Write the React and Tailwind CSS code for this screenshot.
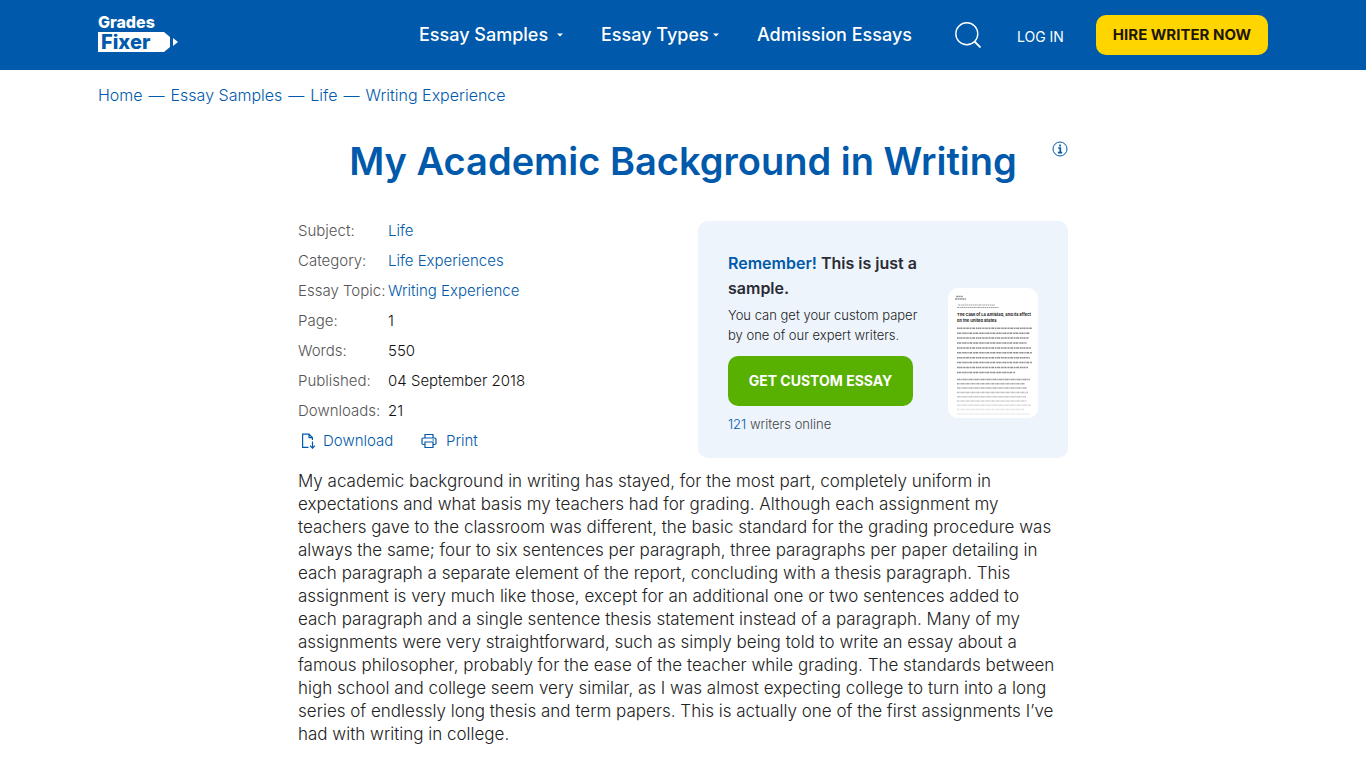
const crumbs = ["Home", "Essay Samples", "Life", "Writing Experience"];

const details = [
  { label: "Subject:", value: "Life", link: true },
  { label: "Category:", value: "Life Experiences", link: true },
  { label: "Essay Topic:", value: "Writing Experience", link: true },
  { label: "Page:", value: "1" },
  { label: "Words:", value: "550" },
  { label: "Published:", value: "04 September 2018" },
  { label: "Downloads:", value: "21" },
];

const essayLines = [
  "My academic background in writing has stayed, for the most part, completely uniform in",
  "expectations and what basis my teachers had for grading. Although each assignment my",
  "teachers gave to the classroom was different, the basic standard for the grading procedure was",
  "always the same; four to six sentences per paragraph, three paragraphs per paper detailing in",
  "each paragraph a separate element of the report, concluding with a thesis paragraph. This",
  "assignment is very much like those, except for an additional one or two sentences added to",
  "each paragraph and a single sentence thesis statement instead of a paragraph. Many of my",
  "assignments were very straightforward, such as simply being told to write an essay about a",
  "famous philosopher, probably for the ease of the teacher while grading. The standards between",
  "high school and college seem very similar, as I was almost expecting college to turn into a long",
  "series of endlessly long thesis and term papers. This is actually one of the first assignments I’ve",
  "had with writing in college.",
];

const firstParagraph = [75, 73, 72, 70, 74, 75, 73, 75, 71, 58];
const secondParagraph = [73, 68, 70, 71, 69, 70, 74, 67, 73];

const Logo = () => (
  <a href="#" aria-label="Grades Fixer" className="block w-20 shrink-0 text-white">
    <span className="block text-base leading-4 font-extrabold">Grades</span>
    <span className="relative mt-0.5 block h-5">
      <svg viewBox="0 0 80 20" className="absolute inset-0 h-5 w-20" aria-hidden="true">
        <path d="M0 0H66L72 5V15L66 20H0Z" fill="#fff" />
        <path d="M75 6L80 10L75 14Z" fill="#fff" />
      </svg>
      <span className="relative block pl-[3px] text-xl leading-5 font-extrabold text-[#0059aa]">Fixer</span>
    </span>
  </a>
);

const Caret = () => (
  <svg viewBox="0 0 6 4" className="h-1 w-1.5 shrink-0" aria-hidden="true">
    <path d="M0 .5H6L3 3.5Z" fill="currentColor" />
  </svg>
);

const Header = () => (
  <header className="bg-[#0059aa] px-4">
    <div className="mx-auto flex h-[70px] max-w-[1170px] items-center justify-between text-white">
      <div className="pb-1">
        <Logo />
      </div>
      <div className="flex items-center">
        <nav className="flex gap-[38px] text-[18px] leading-6 font-medium whitespace-nowrap">
          <a href="#" className="flex w-36 items-center justify-between">
            Essay Samples <Caret />
          </a>
          <a href="#" className="flex w-[118px] items-center justify-between">
            Essay Types <Caret />
          </a>
          <a href="#" className="w-[158px]">Admission Essays</a>
        </nav>
        <button type="button" aria-label="Search" className="ml-10 size-[26px]">
          <svg viewBox="0 0 26 26" className="size-[26px]" fill="none" stroke="currentColor" strokeWidth="1.4" aria-hidden="true">
            <circle cx="11.8" cy="11.8" r="11" />
            <path d="M19.5 19.5L25.5 25.5" strokeWidth="1.8" />
          </svg>
        </button>
        <a href="#" className="ml-9 w-[49px] pt-1 text-sm leading-5 whitespace-nowrap">LOG IN</a>
        <button type="button" className="ml-[30px] h-10 w-[172px] rounded-[10px] bg-[#ffd500] text-[15px] font-bold whitespace-nowrap text-[#1e1705]">
          HIRE WRITER NOW
        </button>
      </div>
    </div>
  </header>
);

const Breadcrumbs = () => (
  <nav aria-label="Breadcrumb" className="mx-auto flex max-w-[1170px] gap-1.5 pt-[15px] text-base leading-5 font-light text-[#0059aa]">
    {crumbs.map((crumb, i) => (
      <span key={crumb} className="flex gap-1.5">
        {i > 0 && <span>—</span>}
        <a href="#">{crumb}</a>
      </span>
    ))}
  </nav>
);

const SampleSheet = () => (
  <svg viewBox="0 0 90 130" className="h-[130px] w-[90px] shrink-0" role="img" aria-label="Essay sample preview">
    <defs>
      <linearGradient id="sheet-fade" x1="0" y1="0" x2="0" y2="1">
        <stop offset="0" stopColor="#fff" stopOpacity="0" />
        <stop offset="1" stopColor="#fff" stopOpacity=".9" />
      </linearGradient>
    </defs>
    <rect width="90" height="130" rx="10" fill="#fff" />
    <path d="M8 8.5H15M7 11H18" stroke="#999" strokeWidth="1.5" strokeDasharray="2 .4" />
    <path d="M10 17H47M9 19.5H51" stroke="#888" strokeWidth=".8" strokeDasharray="2 .5 1.3 .4" />
    <g fontSize="4" fontWeight="700" fill="#222">
      <text x="9" y="28">The Case of La Amistad, and Its Effect</text>
      <text x="9" y="34">on the United States</text>
    </g>
    <g stroke="#8c8c8c" strokeWidth="1.5">
      {firstParagraph.map((width, i) => (
        <line key={i} x1="9" x2={9 + width} y1={40.3 + i * 4.9} y2={40.3 + i * 4.9} strokeDasharray={i % 2 ? "1.2 .4 2.3 .7 .8 .3" : "1.7 .5 .9 .3 2.1 .8"} />
      ))}
      {secondParagraph.map((width, i) => (
        <line key={i} x1="9" x2={9 + width} y1={91.5 + i * 4.3} y2={91.5 + i * 4.3} strokeDasharray={i % 2 ? "1.9 .6 1.1 .3 .7 .4" : ".9 .3 2.4 .7 1.3 .4"} />
      ))}
    </g>
    <rect y="85" width="90" height="45" rx="10" fill="url(#sheet-fade)" />
  </svg>
);

const EssayDetails = () => (
  <div className="text-[15px] leading-[30px] font-light">
    <dl className="-mt-[5px]">
      {details.map(({ label, value, link }) => (
        <div key={label} className="flex h-[30px]">
          <dt className="w-[90px] whitespace-nowrap text-[#555]">{label}</dt>
          <dd className="text-[#111]">
            {link ? <a href="#" className="text-[#0059aa]">{value}</a> : value}
          </dd>
        </div>
      ))}
    </dl>
    <div className="flex pl-1 text-[#0059aa]">
      <button type="button" className="flex w-[119px] items-center gap-[7px]">
        <svg viewBox="0 0 14 16" className="h-4 w-3.5" fill="none" stroke="currentColor" strokeWidth="1.2" aria-hidden="true">
          <path d="M6.5 14.4H.6V1.2H7L10.4 4.6V7M7 1.2V4.6H10.4M10.5 8.5V15M8 12.7L10.5 15.2L13 12.7" />
        </svg>
        Download
      </button>
      <button type="button" className="flex items-center gap-[9px]">
        <svg viewBox="0 0 16 16" className="size-4" fill="none" stroke="currentColor" strokeWidth="1.2" aria-hidden="true">
          <path d="M4 5V1.5H12V5M4 11.5H2.2Q1 11.5 1 10.3V6.2Q1 5 2.2 5H13.8Q15 5 15 6.2V10.3Q15 11.5 13.8 11.5H12M4 9H12V14.5H4ZM11.5 7H13" />
        </svg>
        Print
      </button>
    </div>
  </div>
);

const OrderCard = () => (
  <aside className="flex w-[370px] shrink-0 items-center justify-between rounded-[10px] bg-[#edf4fc] px-[30px] pt-[30px] pb-6">
    <div className="w-[200px]">
      <p className="text-base leading-[25px] font-semibold whitespace-nowrap text-[#2b2b33]">
        <span className="text-[#0059aa]">Remember!</span> This is just a<br />
        sample.
      </p>
      <p className="mt-1 text-[13px] leading-5 font-light whitespace-nowrap text-[#222]">
        You can get your custom paper<br />
        by one of our expert writers.
      </p>
      <button type="button" className="mt-[11px] h-[50px] w-[185px] rounded-[10px] bg-[#58b000] text-sm font-bold whitespace-nowrap text-white">
        GET CUSTOM ESSAY
      </button>
      <p className="mt-2 text-[13px] leading-5 font-light text-[#444]">
        <span className="text-[#0059aa]">121</span> writers online
      </p>
    </div>
    <div className="pt-5">
      <SampleSheet />
    </div>
  </aside>
);

export default function App() {
  return (
    <div className="bg-white font-['Inter','Liberation_Sans',sans-serif]">
      <Header />
      <div className="px-4">
        <Breadcrumbs />
      </div>
      <main className="mx-auto max-w-[770px]">
        <div className="relative mt-8 px-10">
          <h1 className="text-center text-[38px] leading-[48px] font-semibold whitespace-nowrap text-[#0059aa]">
            My Academic Background in Writing
          </h1>
          <button type="button" aria-label="About this essay" className="absolute top-1 right-0 text-[#0059aa]">
            <svg viewBox="0 0 16 16" className="size-4" fill="none" stroke="currentColor" aria-hidden="true">
              <circle cx="8" cy="8" r="7" />
              <path d="M8 3.6V5.4M6.2 7H8.3V11.5M6 11.7H10.2" strokeWidth="1.7" />
            </svg>
          </button>
        </div>
        <div className="mt-9 flex items-start justify-between">
          <EssayDetails />
          <OrderCard />
        </div>
        <p className="mt-3 text-[17px] leading-[23px] font-light text-[#222]">
          {essayLines.map((line) => (
            <span key={line} className="block whitespace-nowrap">{line}</span>
          ))}
        </p>
      </main>
    </div>
  );
}
